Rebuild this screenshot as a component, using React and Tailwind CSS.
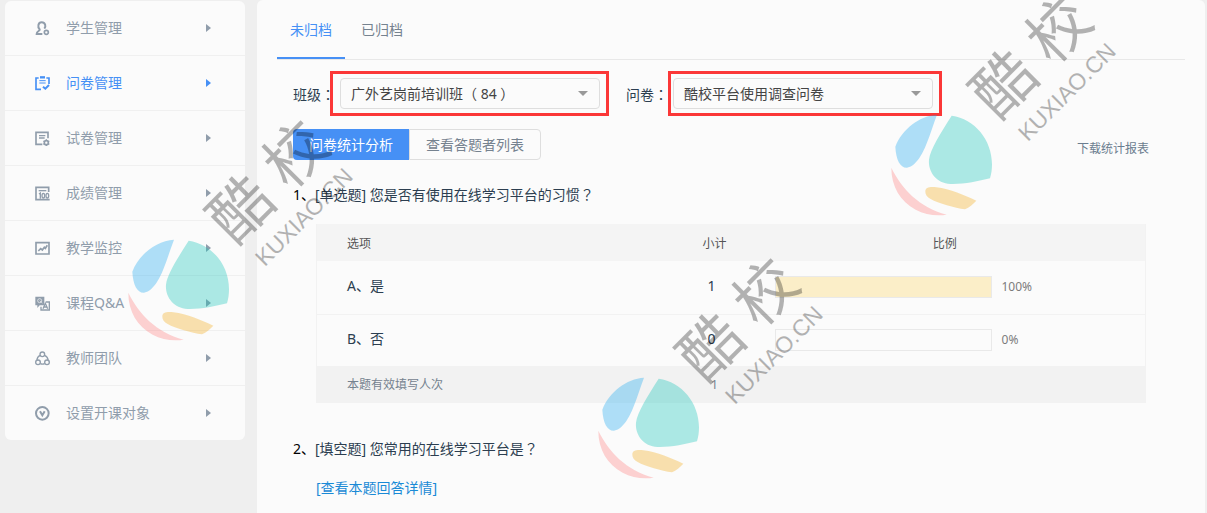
import { useState } from 'react';
import clsx from 'clsx';

const svgProps = {
  viewBox: '0 0 45 45',
  fill: 'none',
  stroke: 'currentColor',
  strokeWidth: 5,
  className: 'w-[15px] h-[15px] shrink-0',
  'aria-hidden': true,
};

const StudentIcon = () => (
  <svg {...svgProps} strokeWidth={6}>
    <path d="M22 39H5C5 29 15 31 14 25C7 18 9 4 20 4S34 16 28 23" />
    <circle cx="34" cy="34" r="6" strokeWidth="5" />
  </svg>
);

const SurveyIcon = () => (
  <svg {...svgProps}>
    <path d="M11 6H3V40H18M34 6H42V24" />
    <path d="M15 4H30" strokeWidth="7" />
    <path d="M13 14H32M13 21H32" strokeWidth="3" />
    <path d="M24 32L31 38L42 27" strokeWidth="6" />
  </svg>
);

const PaperIcon = () => (
  <svg {...svgProps}>
    <path d="M22 40H3V4H39V22" />
    <path d="M12 14H31M12 21H29" strokeWidth="4" />
    <circle cx="34" cy="35" r="6" />
    <path d="M34 25V29M34 41V45M25 30L29 32M39 38L43 40M43 30L39 32M29 38L25 40" strokeWidth="4" />
  </svg>
);

const ScoreIcon = () => (
  <svg {...svgProps}>
    <path d="M41 18V4H3V41H44" />
    <path d="M11 14H34" strokeWidth="4" />
    <path d="M12 24L16 21V38" strokeWidth="4" />
    <ellipse cx="25" cy="29" rx="4" ry="7" strokeWidth="4" />
    <ellipse cx="37" cy="29" rx="4" ry="7" strokeWidth="4" />
  </svg>
);

const MonitorIcon = () => (
  <svg {...svgProps}>
    <path d="M3 5H42V39H3Z" />
    <path d="M10 30L17 23L22 27L28 19L31 22L37 13" />
  </svg>
);

const QaIcon = () => (
  <svg {...svgProps} strokeWidth={4}>
    <path d="M1 2H28V28H14L7 36V28H1Z" fill="currentColor" stroke="none" />
    <circle cx="14" cy="14" r="6" stroke="#fbfbfb" strokeWidth="2" />
    <path d="M14 14L22 21" stroke="#fbfbfb" strokeWidth="2" />
    <path d="M32 18H43V42H18V32" />
    <path d="M24 38L31 22L38 38M27 33H35" />
  </svg>
);

const TeamIcon = () => (
  <svg {...svgProps} strokeWidth={4}>
    <circle cx="22" cy="10" r="7" />
    <circle cx="9" cy="34" r="7" />
    <circle cx="36" cy="34" r="7" />
    <path d="M15 13Q6 18 6 27M29 13Q39 18 39 27M16 38Q22 41 29 38" />
  </svg>
);

const TargetIcon = () => (
  <svg {...svgProps} strokeWidth={6}>
    <circle cx="22" cy="22" r="19" />
    <path d="M15 16L22 28L29 16" />
  </svg>
);

const MENU = [
  { label: '学生管理', Icon: StudentIcon },
  { label: '问卷管理', Icon: SurveyIcon, active: true },
  { label: '试卷管理', Icon: PaperIcon },
  { label: '成绩管理', Icon: ScoreIcon },
  { label: '教学监控', Icon: MonitorIcon },
  { label: '课程Q&A', Icon: QaIcon },
  { label: '教师团队', Icon: TeamIcon },
  { label: '设置开课对象', Icon: TargetIcon },
];

const OPTIONS = [
  { label: 'A、是', count: 1, percent: 100 },
  { label: 'B、否', count: 0, percent: 0 },
];

const TABS = ['未归档', '已归档'];

// centred full-width punctuation
const Punct = ({ children }) => (
  <span className="font-['Noto_Sans_CJK_TC',sans-serif] leading-none">{children}</span>
);

const Sidebar = () => (
  <nav className="w-[240px] shrink-0 self-start mt-px bg-[#fbfbfb] rounded-md">
    <ul>
      {MENU.map(({ label, Icon, active }) => (
        <li key={label} className="border-b border-[#f0f0f0] last:border-b-0">
          <a
            href="#"
            className={clsx(
              'flex items-center h-[54px] pl-[30px] pr-[34px]',
              active ? 'text-[#4690f5]' : 'text-[#909dab]'
            )}
          >
            <Icon />
            <span className="ml-4 flex-1">{label}</span>
            <svg viewBox="0 0 5 8" className="w-[5px] h-2" fill="currentColor" aria-hidden="true">
              <path d="M0 0L5 4L0 8Z" />
            </svg>
          </a>
        </li>
      ))}
    </ul>
  </nav>
);

const Select = ({ id, options }) => (
  <div className="relative w-[260px]">
    <select
      id={id}
      className="block w-full h-[31px] pl-[10px] pr-8 appearance-none rounded border border-[#dedede] bg-[#fbfbfb] text-[#444]"
    >
      {options.map(o => <option key={o}>{o}</option>)}
    </select>
    <svg
      viewBox="0 0 10 5"
      className="absolute right-3 top-[13px] w-[10px] h-[5px] pointer-events-none"
      fill="#999"
      aria-hidden="true"
    >
      <path d="M0 0H10L5 5Z" />
    </svg>
  </div>
);

const Watermark = ({ className }) => (
  <svg
    viewBox="0 0 750 720"
    className={clsx('absolute w-[250px] h-[240px] overflow-visible pointer-events-none', className)}
    aria-hidden="true"
  >
    <g opacity="0.35">
      <path fill="#22abf0" d="M162 389C110 392 57 432 37 485C39 525 52 549 72 548C98 546 119 506 130 478C142 448 151 418 162 389Z" />
      <path fill="#19c5ba" d="M206 392C275 402 327 464 327 538C327 554 325 567 321 580C285 589 242 598 203 597C160 595 135 560 138 524C142 492 172 446 206 392Z" />
      <path fill="#fe8181" d="M25 548C56 612 108 666 191 689C160 694 126 689 98 674C52 648 25 605 25 548Z" />
      <path fill="#f3ae1f" d="M127 620C126 606 143 605 160 607C202 612 244 631 280 647C270 658 259 667 246 673C215 669 166 655 143 642C132 635 127 629 127 620Z" />
    </g>
    <g fill="#000" opacity="0.29">
      <g transform="translate(364 417) rotate(-45)" fontSize="184" fontWeight="400" fontFamily="Noto Sans CJK SC, sans-serif">
        <text x="-8" y="-20">酷</text>
        <text x="224" y="-20">校</text>
      </g>
      <text
        transform="translate(434 472) rotate(-45)"
        fontSize="69"
        fontFamily="Liberation Sans, sans-serif"
      >
        KUXIAO.CN
      </text>
    </g>
  </svg>
);

const ResultTable = () => (
  <table className="w-full table-fixed border-x border-[#f2f2f2]">
    <colgroup>
      <col />
      <col className="w-[120px]" />
      <col className="w-[371px]" />
    </colgroup>
    <thead className="bg-[#f4f4f4] text-xs text-[#555]">
      <tr className="h-[37px]">
        <th className="pt-0.5 pl-[30px] text-left font-normal">选项</th>
        <th className="pt-0.5 font-normal">小计</th>
        <th className="pt-0.5 pr-[30px] font-normal">比例</th>
      </tr>
    </thead>
    <tbody>
      {OPTIONS.map(o => (
        <tr key={o.label} className="h-[53px] border-b border-[#f2f2f2] last:h-[52px] last:border-b-0">
          <td className="pb-0.5 pl-[30px]">{o.label}</td>
          <td className="pb-0.5 pr-[6px] text-center">{o.count}</td>
          <td>
            <div className="flex items-center gap-[10px]">
              <div className="w-[217px] h-[22px] border border-[#e9e9e9]">
                <div className="h-full bg-[#fbeec8]" style={{ width: `${o.percent}%` }} />
              </div>
              <span className="text-xs text-[#7b7b7b]">{o.percent}%</span>
            </div>
          </td>
        </tr>
      ))}
    </tbody>
    <tfoot className="bg-[#f2f2f2] text-xs text-[#75828f]">
      <tr className="h-[37px]">
        <td className="pl-[30px]">本题有效填写人次</td>
        <td className="text-center">1</td>
        <td />
      </tr>
    </tfoot>
  </table>
);

export default function App() {
  const [tab, setTab] = useState(TABS[0]);

  return (
    <div className="relative flex gap-3 min-h-screen overflow-hidden bg-[#efefef] pl-[5px] pr-[2px] font-['Noto_Sans','Noto_Sans_CJK_SC',sans-serif] text-sm text-[#2c3e50]">
      <Sidebar />

      <main className="flex-1 min-w-0 rounded-t-md bg-[#fbfbfb] pb-[15px]">
        {/* Tabs */}
        <div className="mx-5 flex gap-[3px] border-b border-[#e8e8e8]">
          {TABS.map(t => (
            <button
              key={t}
              type="button"
              onClick={() => setTab(t)}
              className={clsx(
                'h-[59px] px-[13px] pt-0.5 border-b-2',
                tab === t ? 'text-[#4690f5] border-[#4690f5]' : 'text-[#75828f] border-transparent'
              )}
            >
              {t}
            </button>
          ))}
        </div>

        <div className="pl-9 pr-14">
          {/* Filters */}
          <div className="flex items-center pt-[11px]">
            <label htmlFor="class" className="w-[37px] pt-0.5 whitespace-nowrap">班级<Punct>：</Punct></label>
            <div className="border-3 border-[#fb3737] py-1 pl-[7px] pr-[6px]">
              <Select id="class" options={['广外艺岗前培训班（ 84 ）']} />
            </div>
            <label htmlFor="survey" className="ml-[17px] w-[42px] pt-0.5 whitespace-nowrap">问卷<Punct>：</Punct></label>
            <div className="border-3 border-[#fb3737] py-1 pl-[2px] pr-[6px]">
              <Select id="survey" options={['酷校平台使用调查问卷']} />
            </div>
          </div>

          <div className="mt-[13px] flex items-center justify-between">
            <div className="flex">
              <button type="button" className="h-[31px] px-4 rounded-l bg-[#4690f5] text-white">问卷统计分析</button>
              <button type="button" className="h-[31px] px-4 rounded-r border border-[#dedede] text-[#75828f]">查看答题者列表</button>
            </div>
            <a href="#" className="mt-2 text-xs text-[#6b7d8f]">下载统计报表</a>
          </div>

          {/* Questions */}
          <section className="mt-[25px]">
            <h2 className="leading-5"><span className="text-black">1、</span>[单选题] 您是否有使用在线学习平台的习惯<Punct>？</Punct></h2>
            <div className="mt-[19px] ml-[23px] mr-[3px]">
              <ResultTable />
            </div>
          </section>

          <section className="mt-9">
            <h2 className="leading-5"><span className="text-black">2、</span>[填空题] 您常用的在线学习平台是<Punct>？</Punct></h2>
            <a href="#" className="block mt-[19px] ml-[23px] leading-5 text-[#1a8ad6]">[查看本题回答详情]</a>
          </section>
        </div>
      </main>

      <Watermark className="left-[120px] top-[110px]" />
      <Watermark className="left-[883px] top-[-15px]" />
      <Watermark className="left-[590px] top-[248px]" />
    </div>
  );
}
